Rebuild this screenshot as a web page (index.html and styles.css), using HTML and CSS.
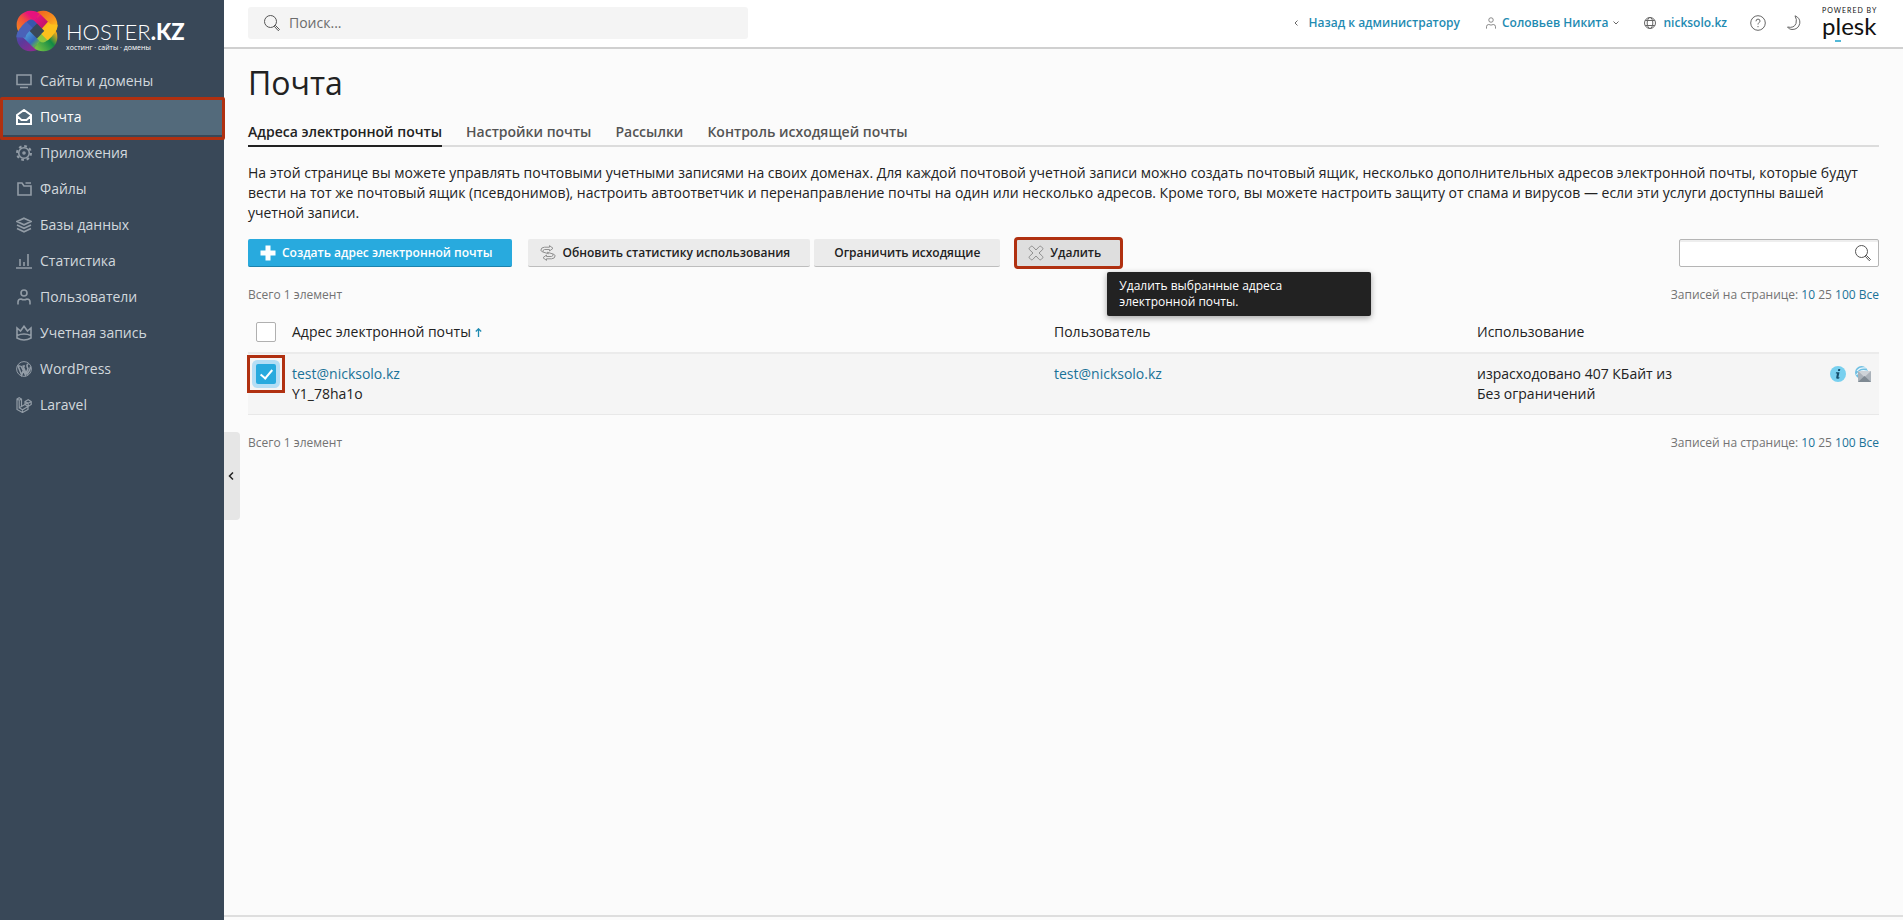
FILE: index.html
```html
<!DOCTYPE html>
<html lang="ru">
<head>
<meta charset="utf-8">
<title>Почта</title>
<link rel="stylesheet" href="styles.css">
</head>
<body>
<svg class="sprite" width="0" height="0" aria-hidden="true">
  <symbol id="search" viewBox="0 0 16 16"><circle cx="6.500" cy="6.500" r="6"/><path d="M10.500 11.500l1-1 4 4-1.200 1.200zM10.200 10.200l.8.800"/></symbol>
  <symbol id="user" viewBox="0 0 16 16"><circle cx="8" cy="4" r="3"/><path d="M2 15.500v-2.500q0-3 3-3q3 1.600 6 0q3 0 3 3v2.500"/></symbol>
</svg>
<div class="app">
  <aside class="sidebar">
    <a class="brand" href="#">
      <svg class="brand-mark" viewBox="0 0 42 42" aria-hidden="true">
        <defs>
          <linearGradient id="ga" gradientUnits="userSpaceOnUse" x1="4" y1="22" x2="22" y2="5"><stop offset="0" stop-color="#f58220"/><stop offset=".45" stop-color="#f0503c"/><stop offset=".75" stop-color="#e6127d"/></linearGradient>
          <linearGradient id="gb" gradientUnits="userSpaceOnUse" x1="24" y1="3" x2="38" y2="24"><stop offset="0" stop-color="#f26a21"/><stop offset=".5" stop-color="#f8971d"/><stop offset="1" stop-color="#ffd21e"/></linearGradient>
          <linearGradient id="gc" gradientUnits="userSpaceOnUse" x1="19" y1="36" x2="38" y2="20"><stop offset="0" stop-color="#6fbf44"/><stop offset=".6" stop-color="#128a45"/><stop offset="1" stop-color="#f6a81c"/></linearGradient>
          <linearGradient id="gd" gradientUnits="userSpaceOnUse" x1="5" y1="18" x2="20" y2="38"><stop offset="0" stop-color="#4a58b0"/><stop offset=".45" stop-color="#5a3a9c"/><stop offset="1" stop-color="#8a2c90"/></linearGradient>
          <linearGradient id="ge" gradientUnits="userSpaceOnUse" x1="20" y1="8" x2="35" y2="21"><stop offset="0" stop-color="#e6127d"/><stop offset=".55" stop-color="#c4146c"/><stop offset=".6" stop-color="#fbb818"/><stop offset="1" stop-color="#ffd21e"/></linearGradient>
          <linearGradient id="gf" gradientUnits="userSpaceOnUse" x1="7" y1="21" x2="21" y2="35"><stop offset="0" stop-color="#5cb0e4"/><stop offset=".7" stop-color="#3568bc"/><stop offset="1" stop-color="#63b848"/></linearGradient>
        </defs>
        <g fill="none" stroke-width="9">
          <path d="M7.400 20.800A9.800 9.800 0 0 0 21.200 34.600" stroke="url(#gd)"/>
          <path d="M20.800 7.400A9.800 9.800 0 0 1 34.600 21.200" stroke="url(#gb)"/>
          <path d="M20.800 7.400L7.400 20.800" stroke="#3a56ac"/>
          <path d="M34.600 21.200L21.200 34.600" stroke="#8cc63f"/>
          <path d="M7.400 21.200A9.800 9.800 0 0 1 21.200 7.400" stroke="url(#ga)"/>
          <path d="M34.600 20.800A9.800 9.800 0 0 1 20.800 34.600" stroke="url(#gc)"/>
          <path d="M21.200 7.400L34.600 20.800" stroke="url(#ge)"/>
          <path d="M7.400 21.200L20.800 34.600" stroke="url(#gf)"/>
          <path d="M13.500 14.700L9 19.200Q5 23.500 4.800 27.500" stroke="#4a62b8"/>
          <path d="M28.500 27.300L33 22.800Q37 18.500 37.200 14.500" stroke="#fcc01c"/>
        </g>
      </svg>
      <span class="brand-text"><span class="brand-name">HOSTER<b>.KZ</b></span><span class="brand-sub">хостинг · сайты · домены</span></span>
    </a>
    <nav class="nav">
      <a href="#"><svg viewBox="0 0 16 16"><path d="M1 2h14v9.500H1zM4 14.500h8"/></svg>Сайты и домены</a>
      <a href="#" class="active"><svg viewBox="0 0 16 16"><path d="M1 6l7-5 7 5v9H1zM1 7l4.500 4h5L15 7"/></svg>Почта</a>
      <a href="#"><svg viewBox="0 0 16 16"><circle cx="8" cy="8" r="5.300"/><circle cx="8" cy="8" r="7" stroke-width="2" stroke-dasharray="2.750 2.750"/><circle cx="8" cy="8" r="1"/></svg>Приложения</a>
      <a href="#"><svg viewBox="0 0 16 16"><path d="M2 2h4l2 3h7v9H2zM9.500 2H15"/></svg>Файлы</a>
      <a href="#"><svg viewBox="0 0 16 16"><path d="M8 1.200l7 3.300-7 3.300-7-3.300zM1 8l7 3.300L15 8M1 11.500l7 3.300 7-3.300"/></svg>Базы данных</a>
      <a href="#"><svg viewBox="0 0 16 16"><path d="M0 15h16M4 6v7M8 9v4M12 1v12"/></svg>Статистика</a>
      <a href="#"><svg viewBox="0 0 16 16"><use href="#user"/></svg>Пользователи</a>
      <a href="#"><svg viewBox="0 0 16 16"><path d="M1 13V3l3.500 3L8 1.200 11.500 6 15 3v10q-7 4-14 0zM1 10.500q7-3 14 0"/></svg>Учетная запись</a>
      <a href="#"><svg viewBox="0 0 16 16"><circle cx="8" cy="8" r="7.400" stroke-width="1"/><path d="M2 5l3.700 9L8 7.500M4.500 5h-3M5 5l4.500 9L12 7.500Q11 6 11 4.500q0-1.500 1.500-1.500M6.500 5H9M7 5l3.500 8.500M14.500 5.500q0 3-3.500 8"/></svg>WordPress</a>
      <a href="#"><svg viewBox="0 0 16 16"><path stroke-width="1.200" d="M1 2l2.200-1.200L5.500 2v7.500L9 7.500V4.500L12.200 2.700 15.200 4.500V7.500L12 9.500V12.500L6.500 15.500 1 12.500zM1 2l2.200 1.300L5.500 2M3.200 3.300v7.500L12 5.800M3.200 10.800l3.300 2L12 9.500M9 4.500l3.200 1.700 3-1.700M12.200 6.200v3.300M9 7.500l3 2M6.500 12.800v2.700"/></svg>Laravel</a>
    </nav>
  </aside>

  <div class="page">
    <button class="collapse" aria-label="Свернуть"><svg width="6" height="8" viewBox="0 0 6 8"><path d="M5 .5L1.500 4 5 7.500"/></svg></button>
    <header class="topbar">
      <label class="global-search"><svg class="i16" viewBox="0 0 16 16"><use href="#search"/></svg><input type="text" placeholder="Поиск..." aria-label="Поиск"></label>
      <div class="tools">
        <a href="#" class="back"><svg width="4" height="6" viewBox="0 0 4 6"><path d="M3.500 .5L1 3l2.500 2.500"/></svg>Назад к администратору</a>
        <a href="#" class="account"><svg width="12" height="12" viewBox="0 0 16 16"><use href="#user"/></svg>Соловьев Никита<svg class="caret" width="6" height="4" viewBox="0 0 6 4"><path d="M.5 .5L3 3 5.500 .5"/></svg></a>
        <a href="#" class="site"><svg width="12" height="12" viewBox="0 0 12 12"><circle cx="6" cy="6" r="5.500"/><ellipse cx="6" cy="6" rx="2.800" ry="5.500"/><path d="M1.200 3.500h9.600M1.200 8.500h9.600"/></svg>nicksolo.kz</a>
        <button class="icon-btn" aria-label="Справка"><svg class="i16" viewBox="0 0 16 16"><circle cx="8" cy="8" r="7.300"/><path d="M6 6.300q0-2.200 2-2.200t2 1.900q0 1-1 1.700T8 9.500M8 11v1.200"/></svg></button>
        <button class="icon-btn" aria-label="Тёмная тема"><svg class="i16" viewBox="0 0 16 16"><path d="M9 .8q5.500 2.200 4.800 7.500Q12.500 14.500 6 14.500q-3 0-4.500-2.500Q8 13.500 10 8.500q1.200-4-1-7.700z"/></svg></button>
        <a href="#" class="plesk"><span class="powered">POWERED BY</span><span class="plesk-name">p<span class="plesk-l">l</span>esk</span></a>
      </div>
    </header>

    <main class="content">
      <h1>Почта</h1>
      <nav class="tabs">
        <a href="#" class="current">Адреса электронной почты</a><a href="#">Настройки почты</a><a href="#">Рассылки</a><a href="#">Контроль исходящей почты</a>
      </nav>
      <p class="intro">На этой странице вы можете управлять почтовыми учетными записями на своих доменах. Для каждой почтовой учетной записи можно создать почтовый ящик, несколько дополнительных адресов электронной почты, которые будут вести на тот же почтовый ящик (псевдонимов), настроить автоответчик и перенаправление почты на один или несколько адресов. Кроме того, вы можете настроить защиту от спама и вирусов — если эти услуги доступны вашей учетной записи.</p>

      <div class="toolbar">
        <button class="btn primary"><svg class="i16" viewBox="0 0 16 16"><path d="M5.500 .5h5v5h5v5h-5v5h-5v-5h-5v-5h5z"/></svg>Создать адрес электронной почты</button>
        <div class="group">
          <button class="btn"><svg class="i16" viewBox="0 0 16 16"><path d="M.8 5.500Q1 2.200 4.500 2.200h5V.6l3.500 2.700L9.500 6V4.500h-5q-1.500 0-1.700 2.500zM15.200 10.500q-.2 3.300-3.700 3.300h-5v1.600L3 12.700 6.500 10v1.500h5q1.500 0 1.700-2.500zM2.800 7l6 1.800M13.200 9L7 7.200"/></svg>Обновить статистику использования</button>
          <button class="btn plain">Ограничить исходящие</button>
        </div>
        <div class="delete-wrap">
          <button class="btn hovered"><svg class="i16" viewBox="0 0 16 16"><path d="M1.200 3.200l2-2Q4 .8 4.700 1.500L8 5l3.300-3.500q.7-.7 1.500-.3l2 2q.4.800-.3 1.500L11 8l3.500 3.300q.7.700.3 1.500l-2 2q-.8.400-1.500-.3L8 11l-3.300 3.500q-.7.700-1.500.3l-2-2q-.4-.8.300-1.500L5 8 1.500 4.700q-.7-.7-.3-1.500z"/></svg>Удалить</button>
          <div class="tooltip" role="tooltip">Удалить выбранные адреса электронной почты.</div>
        </div>
        <label class="filter"><input type="text" aria-label="Поиск по списку"><svg class="i16" viewBox="0 0 16 16"><use href="#search"/></svg></label>
      </div>

      <div class="pager"><span>Всего 1 элемент</span><span>Записей на странице: <a href="#">10</a> 25 <a href="#">100</a> <a href="#">Все</a></span></div>
      <table class="list">
        <thead><tr>
          <th class="c-check"><input type="checkbox" aria-label="Выбрать все"></th>
          <th class="c-mail">Адрес электронной почты <svg width="7" height="9" viewBox="0 0 7 9"><path d="M3.500 9V1M.8 3.500l2.700-2.700 2.700 2.700"/></svg></th>
          <th class="c-user">Пользователь</th>
          <th class="c-usage">Использование</th>
          <th class="c-icons"></th>
        </tr></thead>
        <tbody><tr>
          <td class="c-check"><span class="check-mark"><input type="checkbox" checked aria-label="test@nicksolo.kz"></span></td>
          <td><a href="#">test@nicksolo.kz</a><br>Y1_78ha1o</td>
          <td><a href="#">test@nicksolo.kz</a></td>
          <td>израсходовано 407 КБайт из<br>Без ограничений</td>
          <td><div class="row-icons">
            <svg class="i16" viewBox="0 0 16 16"><circle cx="8" cy="8" r="8" fill="#78d0ef"/><path d="M8.300 3h2l-.4 1.900h-2zM6 6.200h3.500L8.400 11.300h1.200l-.5 1.200Q6 13.500 6.200 11.500L7 7.500H5.800z" fill="#16506e"/></svg>
            <svg class="i16" viewBox="0 0 16 16"><circle cx="6.500" cy="6.500" r="6.500" fill="#6fbfe2"/><path d="M2 5q3-4 9-3M1.500 9Q5 3 12 5" fill="none" stroke="#e8f6fc" stroke-width="1.200"/><path d="M3 5h13v11H3z" fill="#aab2ba"/><path d="M3 5h13l-6.500 6z" fill="#ced3d8"/><path d="M3 16l6.500-6 6.500 6z" fill="#7e8992"/></svg>
          </div></td>
        </tr></tbody>
      </table>
      <div class="pager bottom"><span>Всего 1 элемент</span><span>Записей на странице: <a href="#">10</a> 25 <a href="#">100</a> <a href="#">Все</a></span></div>
    </main>
    <footer class="foot"></footer>
  </div>
</div>
</body>
</html>
```
FILE: styles.css
```css
* { box-sizing: border-box; }
body { margin: 0; background: #fbfbfb; color: #222; font: 14px/20px "Open Sans", "Noto Sans", sans-serif; }
a { color: #1a7298; text-decoration: none; }
button, input { font: inherit; color: inherit; margin: 0; }
svg { flex: none; fill: none; stroke: currentColor; }
.sprite { position: absolute; }
.i16 { width: 16px; height: 16px; }

.app { display: flex; min-height: 100vh; }

.sidebar { flex: none; width: 224px; background: #394858; }
.brand { display: flex; gap: 8px; height: 63px; padding: 10px 16px 0; color: #fff; }
.brand-mark { width: 42px; height: 42px; stroke: none; }
.brand-text { display: flex; flex-direction: column; padding-top: 10px; }
.brand-name { font: 300 22px/24px Lato, sans-serif; }
.brand-name b { font-weight: 900; }
.brand-sub { font: 7px/8px "Open Sans", sans-serif; }
.nav a { display: flex; align-items: center; gap: 8px; height: 36px; padding: 0 16px; color: #d2d8dd; font-weight: 500; }
.nav svg { width: 16px; height: 16px; color: #929ca6; stroke-width: 1.6; }
.nav .active { position: relative; background: #536a7b; color: #fff; }
.nav .active::after { content: ""; position: absolute; inset: -2px -1px -5px 0; border: 3px solid #b03010; border-radius: 2px; z-index: 2; }
.nav .active svg { color: #fff; stroke-width: 2; }

.page { flex: 1; min-width: 0; display: flex; flex-direction: column; position: relative; }
.collapse { position: absolute; left: 0; top: 47%; width: 16px; height: 88px; padding: 0 4px; border: 0; border-radius: 0 4px 4px 0; background: #e6e6e6; text-align: left; }
.collapse svg { display: block; stroke-width: 1.5; }

.topbar { display: flex; align-items: center; justify-content: space-between; height: 49px; padding: 0 24px 2px; background: #fff; border-bottom: 2px solid #d0d0d0; }
.global-search { display: flex; align-items: center; gap: 9px; width: 500px; height: 32px; padding: 0 16px; background: #f4f4f4; border-radius: 3px; color: #555; }
.global-search input { flex: 1; min-width: 0; border: 0; padding: 0; background: none; outline: 0; }
.global-search input::placeholder { color: #6c6c6c; opacity: 1; }
.tools { display: flex; align-items: center; font-size: 12px; font-weight: 600; line-height: 16px; }
.tools > a { display: flex; align-items: center; color: #1f8bb2; }
.tools svg { color: #666; }
.back { gap: 10px; margin-right: 25px; }
.account { gap: 5px; margin-right: 25px; }
.site { gap: 7px; margin-right: 23px; }
.icon-btn { display: flex; padding: 0; border: 0; background: none; margin-right: 20px; }
.tools > .plesk { flex-direction: column; align-items: flex-start; width: 57px; color: #111; }
.powered { font: 7px/7px Lato, sans-serif; letter-spacing: 1px; white-space: nowrap; }
.plesk-name { font: 24px/24px Lato, sans-serif; }
.plesk-l { border-bottom: 2px solid #52b9d8; }

.content { flex: 1; padding: 0 24px; }
h1 { margin: 12px 0 0; font-size: 32px; line-height: 44px; font-weight: 400; }
.tabs { display: flex; gap: 24px; margin-top: 17px; border-bottom: 2px solid #dcdcdc; font-weight: 600; }
.tabs a { padding-bottom: 3px; border-bottom: 2px solid transparent; margin-bottom: -2px; color: #545454; line-height: 20px; }
.tabs .current { color: #222; border-color: #222; }
.intro { margin: 16px 0; }

.toolbar { display: flex; gap: 16px; }
.group { display: flex; gap: 4px; }
.btn { display: flex; align-items: center; gap: 6px; height: 28px; padding: 0 20px 0 12px; border: 0; border-bottom: 1px solid #bdbdbd; border-radius: 2px; background: #ebebeb; color: #222; font-size: 12px; font-weight: 600; white-space: nowrap; }
.btn svg { color: #909090; }
.btn.plain { padding: 0 20px; }
.btn.primary { background: #28aade; border-color: #1c82ac; color: #fff; }
.btn.primary svg { fill: #fff; stroke: none; }
.btn.hovered { background: #dedede; outline: 3px solid #b03010; outline-offset: -1px; }
.delete-wrap { position: relative; }
.tooltip { position: absolute; left: 91px; top: 33px; width: 264px; padding: 6px 72px 6px 12px; border-radius: 2px; background: #222; color: #fff; font-size: 12px; line-height: 16px; font-weight: 500; box-shadow: 0 2px 6px rgba(0, 0, 0, .35); }
.filter { display: flex; align-items: center; width: 200px; height: 28px; margin-left: auto; padding: 0 7px; border: 1px solid #b5b5b5; border-radius: 2px; background: #fff; box-shadow: inset 0 2px 0 #eee; color: #555; }
.filter input { flex: 1; min-width: 0; border: 0; background: none; outline: 0; }

.pager { display: flex; justify-content: space-between; margin-top: 20px; color: #737373; font-size: 12px; line-height: 16px; }
.list { width: 100%; margin-top: 8px; border-collapse: collapse; table-layout: fixed; }
.list th { height: 42px; padding: 0; text-align: left; font-weight: 400; border-bottom: 2px solid #ebebeb; }
.list td { padding: 10px 0; vertical-align: top; background: #f5f5f5; border-bottom: 1px solid #e8e8e8; }
.list th svg { color: #1f8bb2; stroke-width: 1.3; }
.list .c-check { width: 44px; padding-left: 8px; }
.c-user { width: 423px; }
.c-usage { width: 340px; }
.c-icons { width: 62px; }
.list input { appearance: none; display: block; width: 20px; height: 20px; border: 1px solid #b0b0b0; border-radius: 2px; background: #fff; }
.list input:checked { border: 0; background: #28aade; box-shadow: 0 0 0 4px #b5def5; position: relative; }
.list input:checked::after { content: ""; position: absolute; left: 7px; top: 3px; width: 5px; height: 10px; border: solid #fff; border-width: 0 2px 2px 0; transform: rotate(40deg); }
.check-mark { display: block; width: 20px; outline: 3px solid #b03010; outline-offset: 6px; }
.row-icons { display: flex; gap: 9px; padding: 2px 0 0 13px; }
.row-icons svg { stroke: none; }
.foot { height: 5px; border-top: 2px solid #dedede; }
```
